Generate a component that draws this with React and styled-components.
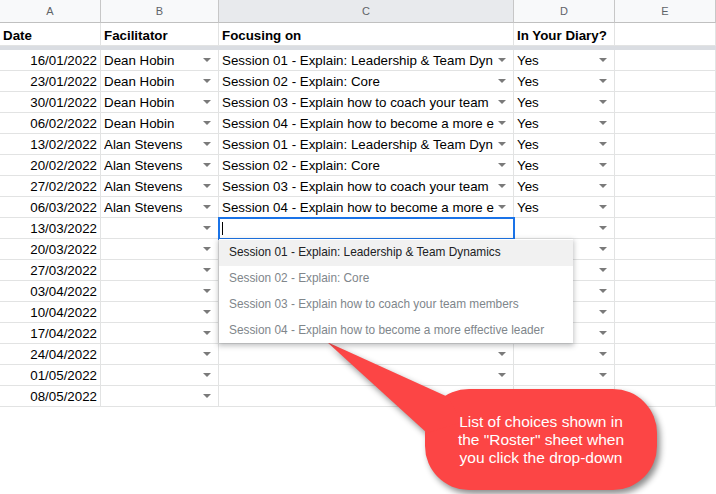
import React from "react";
import styled, { createGlobalStyle } from "styled-components";

const GlobalStyle = createGlobalStyle`
  body {
    margin: 0;
    background: #fff;
    font-family: "Liberation Sans", Arial, sans-serif;
  }
`;

const Sheet = styled.div`
  position: relative;
  width: 716px;
  height: 494px;
  overflow: hidden;
  background: #fff;
`;

const Grid = styled.div`
  display: grid;
  grid-template-columns: 101px 118px 295px 101px 1fr;
`;

const ColHead = styled.div`
  box-sizing: border-box;
  height: 23px;
  display: flex;
  align-items: center;
  justify-content: center;
  background: ${({ $active }) => ($active ? "#e8eaed" : "#f8f9fa")};
  border-right: 1px solid #c7c7c7;
  border-bottom: 1px solid #c0c0c0;
  color: #5f6368;
  font-size: 11px;
`;

const Cell = styled.div`
  position: relative;
  box-sizing: border-box;
  height: 21px;
  display: flex;
  align-items: center;
  padding: 0 3px;
  border-right: 1px solid #e2e3e3;
  border-bottom: 1px solid #e2e3e3;
  font-size: 13.33px;
  color: #000;
  justify-content: ${({ $align }) => ($align === "right" ? "flex-end" : "flex-start")};
  ${({ $selected }) =>
    $selected &&
    `
    z-index: 2;
    outline: 2px solid #1a73e8;
    outline-offset: -1px;
  `}
`;

const HeaderCell = styled(Cell)`
  height: 23px;
  font-weight: bold;
  padding-top: 2px;
`;

const CellText = styled.span`
  flex: 1;
  min-width: 0;
  overflow: hidden;
  white-space: nowrap;
`;

const Arrow = styled.span`
  flex: none;
  width: 0;
  height: 0;
  margin: 0 4px 0 4px;
  border-left: 4px solid transparent;
  border-right: 4px solid transparent;
  border-top: 4px solid #7a7a7a;
`;

const FrozenBar = styled.div`
  grid-column: 1 / -1;
  height: 4px;
  background: #dadde2;
`;

const Caret = styled.span`
  width: 1px;
  height: 13px;
  background: #000;
`;

const Menu = styled.div`
  position: absolute;
  left: 0;
  top: calc(100% + 1px);
  width: 354px;
  padding-top: 1px;
  background: #fff;
  box-shadow: 0 2px 5px 1px rgba(60, 64, 67, 0.3);
`;

const MenuItem = styled.div`
  height: 25.8px;
  display: flex;
  align-items: center;
  padding: 0 0 1px 10px;
  box-sizing: border-box;
  font-size: 11.85px;
  white-space: nowrap;
  background: ${({ $active }) => ($active ? "#f1f1f1" : "#fff")};
  color: ${({ $active }) => ($active ? "#202124" : "#80868b")};
`;

const Callout = styled.div`
  position: absolute;
  left: 300px;
  top: 330px;
  width: 380px;
  height: 164px;
`;

const CalloutShape = styled.svg`
  position: absolute;
  left: 0;
  top: 0;
  filter: drop-shadow(3px 4px 3px rgba(0, 0, 0, 0.45));
`;

const CalloutText = styled.div`
  position: absolute;
  left: 125px;
  top: 59px;
  width: 232px;
  height: 101px;
  display: flex;
  align-items: center;
  justify-content: center;
  text-align: center;
  color: #fff;
  font-size: 15.5px;
  line-height: 18px;
`;

const sessions = [
  "Session 01 - Explain: Leadership & Team Dynamics",
  "Session 02 - Explain: Core",
  "Session 03 - Explain how to coach your team members",
  "Session 04 - Explain how to become a more effective leader",
];

// what fits in column C before the drop-down arrow
const shown = [
  "Session 01 - Explain: Leadership & Team Dyn",
  "Session 02 - Explain: Core",
  "Session 03 - Explain how to coach your team",
  "Session 04 - Explain how to become a more e",
];

const rows = [
  { date: "16/01/2022", who: "Dean Hobin", s: 0, diary: "Yes" },
  { date: "23/01/2022", who: "Dean Hobin", s: 1, diary: "Yes" },
  { date: "30/01/2022", who: "Dean Hobin", s: 2, diary: "Yes" },
  { date: "06/02/2022", who: "Dean Hobin", s: 3, diary: "Yes" },
  { date: "13/02/2022", who: "Alan Stevens", s: 0, diary: "Yes" },
  { date: "20/02/2022", who: "Alan Stevens", s: 1, diary: "Yes" },
  { date: "27/02/2022", who: "Alan Stevens", s: 2, diary: "Yes" },
  { date: "06/03/2022", who: "Alan Stevens", s: 3, diary: "Yes" },
  { date: "13/03/2022", editing: true },
  { date: "20/03/2022" },
  { date: "27/03/2022" },
  { date: "03/04/2022" },
  { date: "10/04/2022" },
  { date: "17/04/2022" },
  { date: "24/04/2022" },
  { date: "01/05/2022" },
  { date: "08/05/2022", last: true },
];

const DataRow = ({ row }) => (
  <>
    <Cell $align="right">{row.date}</Cell>
    <Cell>
      <CellText>{row.who || ""}</CellText>
      <Arrow />
    </Cell>
    {row.editing ? (
      <Cell $selected>
        <Caret />
        <Menu>
          {sessions.map((s, i) => (
            <MenuItem key={s} $active={i === 0}>
              {s}
            </MenuItem>
          ))}
        </Menu>
      </Cell>
    ) : (
      <Cell>
        <CellText>{row.s !== undefined ? shown[row.s] : ""}</CellText>
        {!row.last && <Arrow />}
      </Cell>
    )}
    <Cell>
      <CellText>{row.diary || ""}</CellText>
      {!row.last && <Arrow />}
    </Cell>
    <Cell />
  </>
);

const App = () => {
  return (
    <Sheet>
      <GlobalStyle />
      <Grid>
        <ColHead>A</ColHead>
        <ColHead>B</ColHead>
        <ColHead $active>C</ColHead>
        <ColHead>D</ColHead>
        <ColHead>E</ColHead>

        <HeaderCell>Date</HeaderCell>
        <HeaderCell>Facilitator</HeaderCell>
        <HeaderCell>Focusing on</HeaderCell>
        <HeaderCell>In Your Diary?</HeaderCell>
        <HeaderCell />
        <FrozenBar />

        {rows.map((row) => (
          <DataRow key={row.date} row={row} />
        ))}
      </Grid>

      <Callout>
        <CalloutShape width="380" height="164" viewBox="0 0 380 164">
          <g fill="#fc4545">
            <rect x="125" y="59" width="232" height="101" rx="44" ry="44" />
            <polygon points="27,12 148,67 162,92 127,103" />
          </g>
        </CalloutShape>
        <CalloutText>
          List of choices shown in
          <br />
          the "Roster" sheet when
          <br />
          you click the drop-down
        </CalloutText>
      </Callout>
    </Sheet>
  );
};

export default App;
